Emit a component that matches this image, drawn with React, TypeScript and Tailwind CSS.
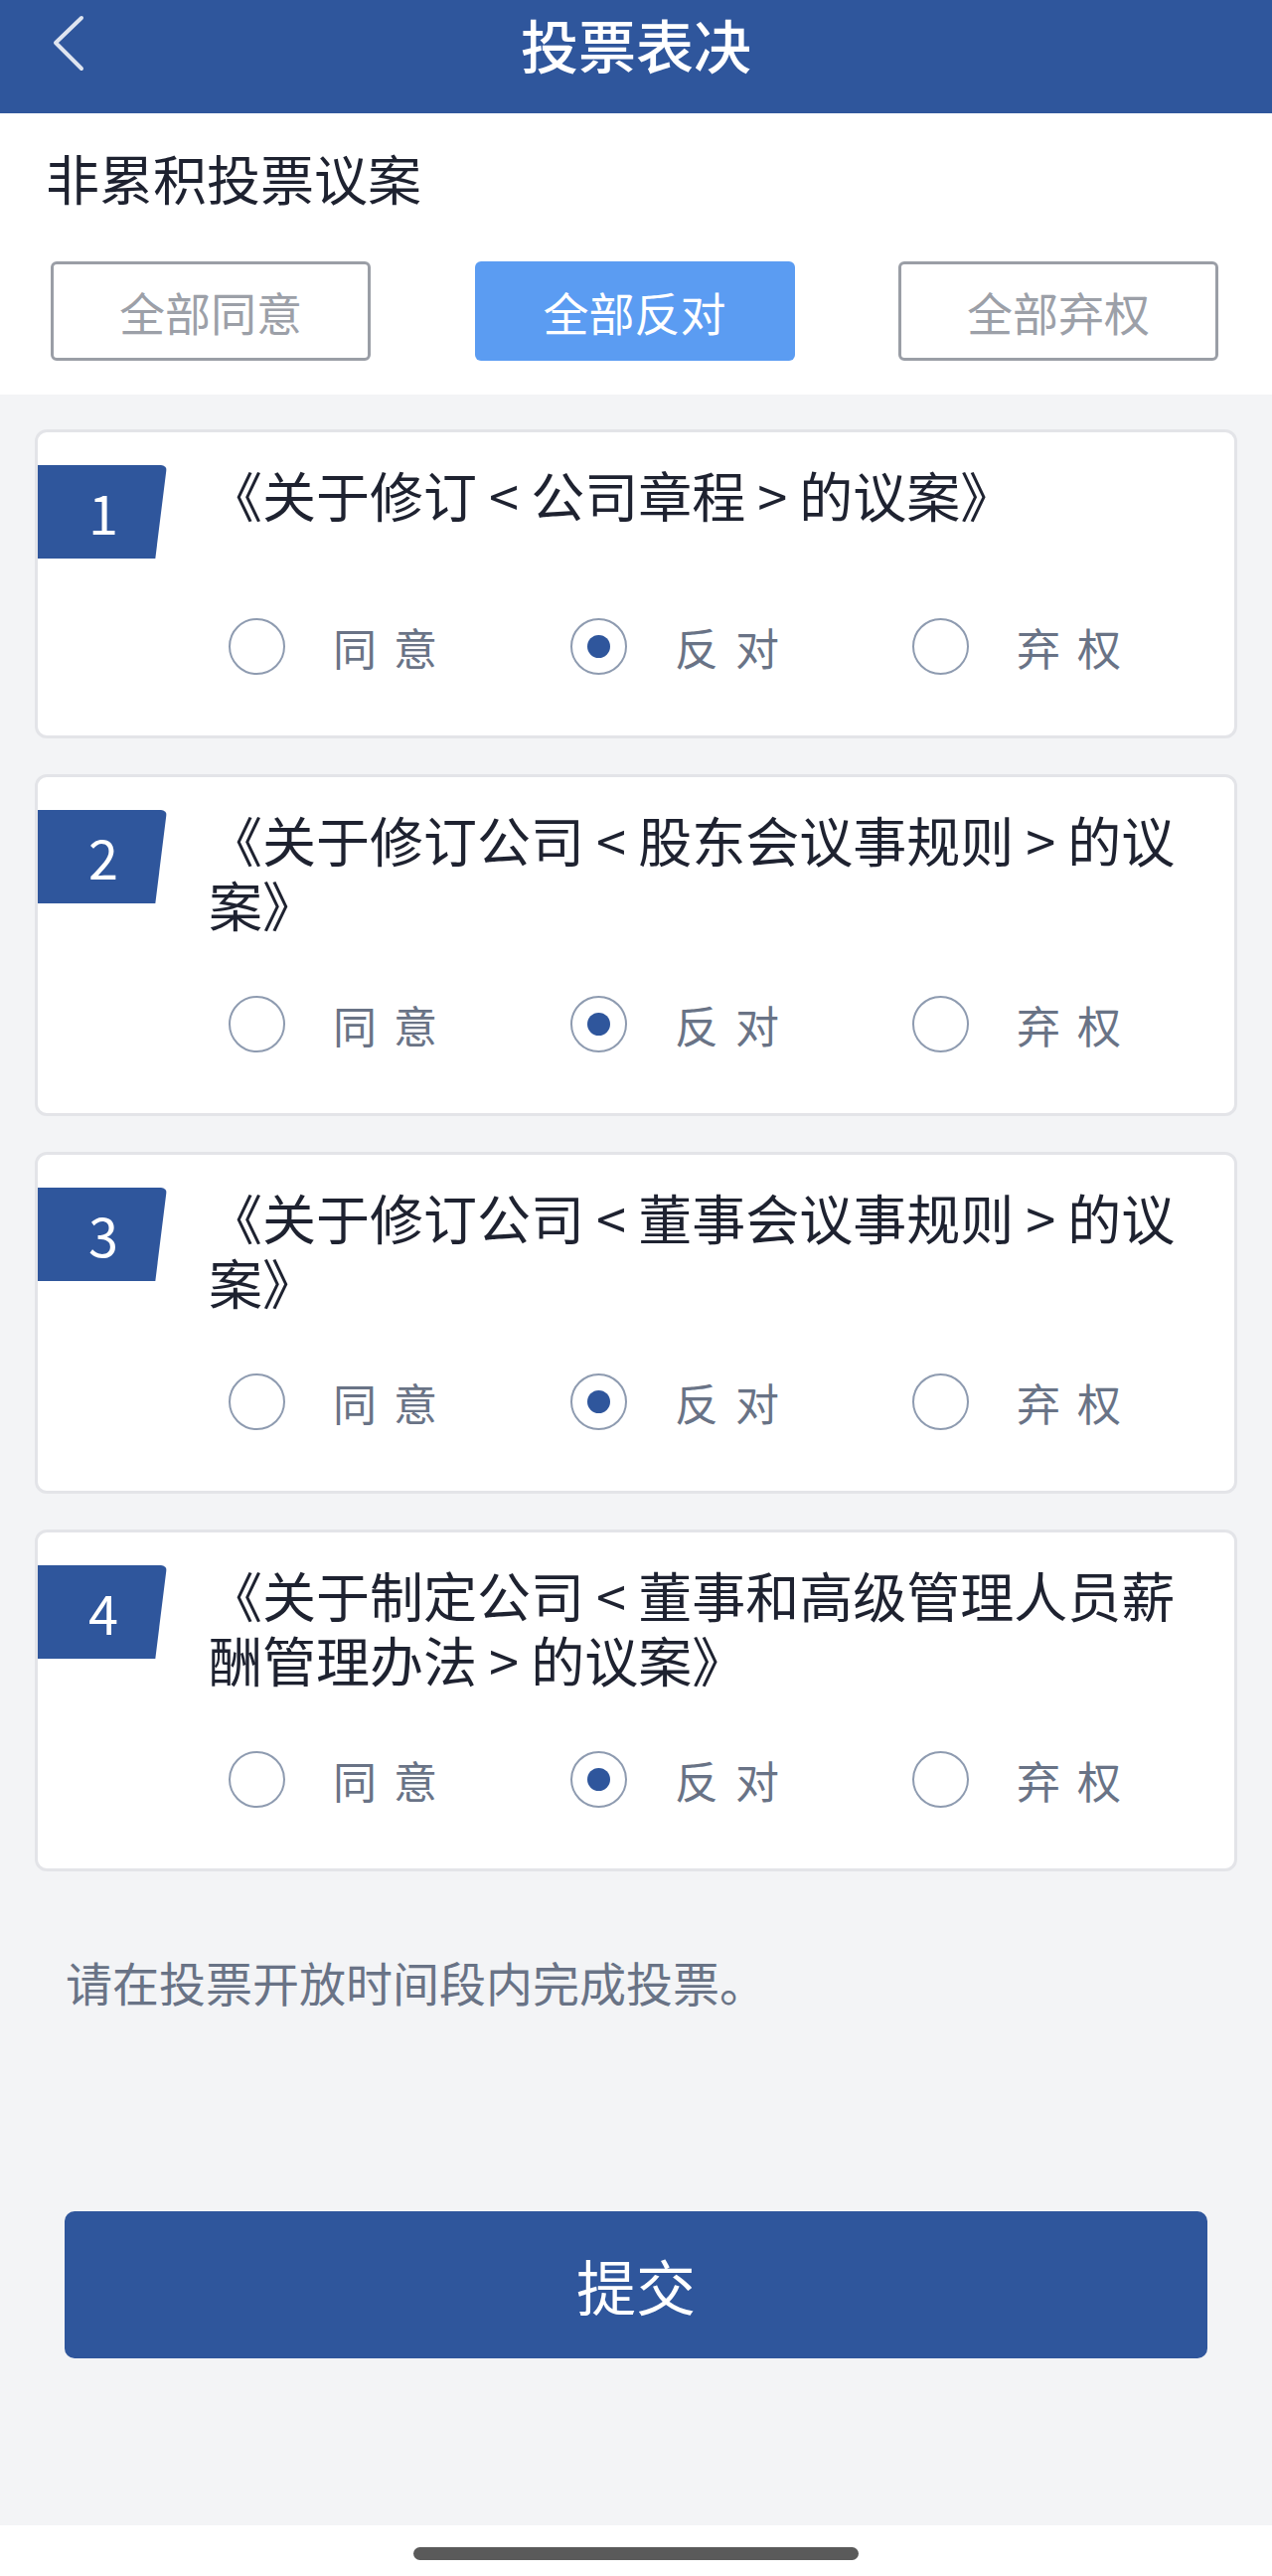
import { useState } from 'react';

type Vote = 'agree' | 'oppose' | 'abstain';

const proposals = [
    '《关于修订 < 公司章程 > 的议案》',
    '《关于修订公司 < 股东会议事规则 > 的议案》',
    '《关于修订公司 < 董事会议事规则 > 的议案》',
    '《关于制定公司 < 董事和高级管理人员薪酬管理办法 > 的议案》',
];

const options: { key: Vote; label: string }[] = [
    { key: 'agree', label: '同意' },
    { key: 'oppose', label: '反对' },
    { key: 'abstain', label: '弃权' },
];

const bulkButtons: { key: Vote; label: string }[] = [
    { key: 'agree', label: '全部同意' },
    { key: 'oppose', label: '全部反对' },
    { key: 'abstain', label: '全部弃权' },
];

const BackIcon = () => (
    <svg width="40" height="60" viewBox="0 0 40 60" fill="none">
        <polyline
            points="32,4 6,29 32,55"
            stroke="#dfe5f0"
            strokeWidth="4"
            strokeLinecap="round"
            strokeLinejoin="round"
        />
    </svg>
);

const Radio = ({ checked }: { checked: boolean }) => (
    <span className="w-[57px] h-[57px] rounded-full border-[2.5px] border-[#8e9bb0] flex items-center justify-center shrink-0">
        {checked && <span className="w-[23px] h-[23px] rounded-full bg-[#2f569c]" />}
    </span>
);

const ProposalCard = ({
    index,
    title,
    value,
    onChange,
}: {
    index: number;
    title: string;
    value: Vote;
    onChange: (v: Vote) => void;
}) => (
    <div className="bg-white border-[3px] border-[#e3e4e8] rounded-[12px] pt-[33px] pb-[61px]">
        <div className="flex items-start">
            <div className="w-[130px] h-[94px] shrink-0 bg-[#2f569c] rounded-r-[6px] [clip-path:polygon(0_0,100%_0,91%_100%,0_100%)] flex items-center justify-center text-white text-[54px] leading-none pl-[2px]">
                {index}
            </div>
            <div className="flex-1 ml-[42px] pr-[40px] -mt-[3px] text-[54px] leading-[65px] text-[#1e2230]">
                {title}
            </div>
        </div>
        <div className="grid grid-cols-[344px_344px_auto] mt-[60px] pl-[192px]">
            {options.map((o) => (
                <button
                    key={o.key}
                    onClick={() => onChange(o.key)}
                    className="flex items-center gap-[48px] text-left"
                >
                    <Radio checked={value === o.key} />
                    <span className="text-[44px] leading-none tracking-[17px] text-[#697386]">
                        {o.label}
                    </span>
                </button>
            ))}
        </div>
    </div>
);

export default function App() {
    const [votes, setVotes] = useState<Vote[]>(['oppose', 'oppose', 'oppose', 'oppose']);
    const [bulk, setBulk] = useState<Vote | null>('oppose');

    const setAll = (v: Vote) => {
        setBulk(v);
        setVotes(proposals.map(() => v));
    };

    return (
        <div className="w-[1280px] h-[2592px] flex flex-col bg-[#f3f4f6] font-['Noto_Sans_CJK_SC','Noto_Sans',sans-serif]">
            <header className="h-[114px] shrink-0 bg-[#2f569c] grid grid-cols-[1fr_auto_1fr] items-start">
                <div className="pl-[50px] pt-[14px]">
                    <BackIcon />
                </div>
                <h1 className="h-[88px] flex items-center text-white text-[58px] font-medium">
                    投票表决
                </h1>
                <div />
            </header>

            <section className="bg-white h-[283px] shrink-0 pt-[32px]">
                <h2 className="pl-[46px] text-[54px] leading-[65px] text-[#1e2230]">非累积投票议案</h2>
                <div className="flex justify-between pl-[51px] pr-[54px] mt-[52px]">
                    {bulkButtons.map((b) =>
                        bulk === b.key ? (
                            <button
                                key={b.key}
                                onClick={() => setAll(b.key)}
                                className="w-[322px] h-[100px] rounded-[6px] bg-[#5b9cf2] text-white text-[46px]"
                            >
                                {b.label}
                            </button>
                        ) : (
                            <button
                                key={b.key}
                                onClick={() => setAll(b.key)}
                                className="w-[322px] h-[100px] rounded-[6px] border-[3px] border-[#9a9ea6] bg-white text-[#9ca0a8] text-[46px]"
                            >
                                {b.label}
                            </button>
                        )
                    )}
                </div>
            </section>

            <main className="flex flex-col gap-[36px] px-[35px] pt-[35px]">
                {proposals.map((p, i) => (
                    <ProposalCard
                        key={i}
                        index={i + 1}
                        title={p}
                        value={votes[i]}
                        onChange={(v) => {
                            setBulk(null);
                            setVotes(votes.map((x, j) => (j === i ? v : x)));
                        }}
                    />
                ))}
            </main>

            <p className="pl-[66px] mt-[81px] text-[47px] leading-[60px] text-[#697386]">
                请在投票开放时间段内完成投票。
            </p>

            <button className="mx-[65px] mt-[201px] h-[148px] rounded-[10px] bg-[#2f569c] text-white text-[60px]">
                提交
            </button>

            <div className="flex-1" />

            <div className="h-[51px] shrink-0 bg-white flex justify-center pt-[22px]">
                <div className="w-[448px] h-[13px] rounded-full bg-[#5a5a5a]" />
            </div>
        </div>
    );
}
